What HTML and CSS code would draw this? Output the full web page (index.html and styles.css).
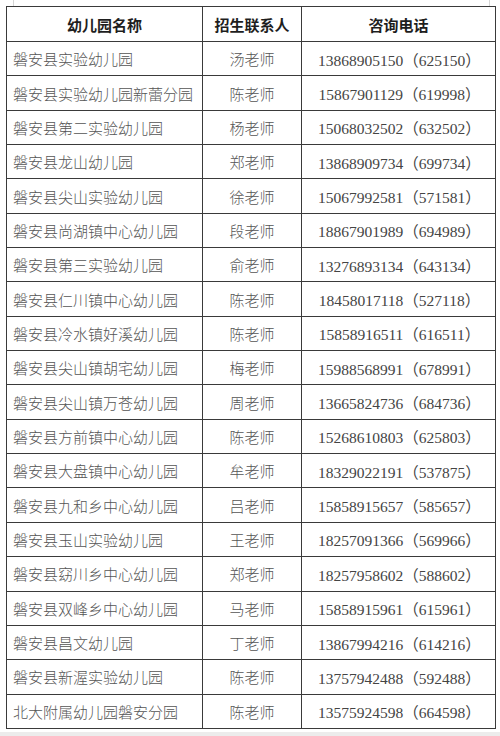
FILE: index.html
```html
<!DOCTYPE html>
<html lang="zh-CN">
<head>
<meta charset="utf-8">
<title>幼儿园招生联系表</title>
<link rel="stylesheet" href="styles.css">
</head>
<body>
<div class="page">
  <div class="marks"></div>
  <div class="table">
    <div class="cell head">幼儿园名称</div>
    <div class="cell head">招生联系人</div>
    <div class="cell head">咨询电话</div>

    <div class="cell name">磐安县实验幼儿园</div><div class="cell who">汤老师</div><div class="cell tel">13868905150（625150）</div>
    <div class="cell name">磐安县实验幼儿园新蕾分园</div><div class="cell who">陈老师</div><div class="cell tel">15867901129（619998）</div>
    <div class="cell name">磐安县第二实验幼儿园</div><div class="cell who">杨老师</div><div class="cell tel">15068032502（632502）</div>
    <div class="cell name">磐安县龙山幼儿园</div><div class="cell who">郑老师</div><div class="cell tel">13868909734（699734）</div>
    <div class="cell name">磐安县尖山实验幼儿园</div><div class="cell who">徐老师</div><div class="cell tel">15067992581（571581）</div>
    <div class="cell name">磐安县尚湖镇中心幼儿园</div><div class="cell who">段老师</div><div class="cell tel">18867901989（694989）</div>
    <div class="cell name">磐安县第三实验幼儿园</div><div class="cell who">俞老师</div><div class="cell tel">13276893134（643134）</div>
    <div class="cell name">磐安县仁川镇中心幼儿园</div><div class="cell who">陈老师</div><div class="cell tel">18458017118（527118）</div>
    <div class="cell name">磐安县冷水镇好溪幼儿园</div><div class="cell who">陈老师</div><div class="cell tel">15858916511（616511）</div>
    <div class="cell name">磐安县尖山镇胡宅幼儿园</div><div class="cell who">梅老师</div><div class="cell tel">15988568991（678991）</div>
    <div class="cell name">磐安县尖山镇万苍幼儿园</div><div class="cell who">周老师</div><div class="cell tel">13665824736（684736）</div>
    <div class="cell name">磐安县方前镇中心幼儿园</div><div class="cell who">陈老师</div><div class="cell tel">15268610803（625803）</div>
    <div class="cell name">磐安县大盘镇中心幼儿园</div><div class="cell who">牟老师</div><div class="cell tel">18329022191（537875）</div>
    <div class="cell name">磐安县九和乡中心幼儿园</div><div class="cell who">吕老师</div><div class="cell tel">15858915657（585657）</div>
    <div class="cell name">磐安县玉山实验幼儿园</div><div class="cell who">王老师</div><div class="cell tel">18257091366（569966）</div>
    <div class="cell name">磐安县窈川乡中心幼儿园</div><div class="cell who">郑老师</div><div class="cell tel">18257958602（588602）</div>
    <div class="cell name">磐安县双峰乡中心幼儿园</div><div class="cell who">马老师</div><div class="cell tel">15858915961（615961）</div>
    <div class="cell name">磐安县昌文幼儿园</div><div class="cell who">丁老师</div><div class="cell tel">13867994216（614216）</div>
    <div class="cell name">磐安县新渥实验幼儿园</div><div class="cell who">陈老师</div><div class="cell tel">13757942488（592488）</div>
    <div class="cell name">北大附属幼儿园磐安分园</div><div class="cell who">陈老师</div><div class="cell tel">13575924598（664598）</div>
  </div>
  <div class="bottom-band"></div>
</div>
</body>
</html>
```

FILE: styles.css
```css
html, body {
  margin: 0;
  padding: 0;
  background: #ffffff;
}

.page {
  width: 500px;
  height: 736px;
  overflow: hidden;
  display: flex;
  flex-direction: column;
}

.marks {
  height: 6px;
  width: 477px;
  margin-left: 13px;
  border-left: 1px solid #d6d6d6;
  border-right: 1px solid #d6d6d6;
  box-sizing: border-box;
  flex: none;
}

.table {
  margin-left: 6px;
  width: 490px;
  box-sizing: border-box;
  display: grid;
  grid-template-columns: 195px 98px 193px;
  grid-template-rows: 34px repeat(20, 33.35px);
  gap: 1px;
  background: #3a3a3a;
  border: 1px solid #3a3a3a;
  flex: none;
}

.cell {
  background: #ffffff;
  display: flex;
  align-items: center;
  font-family: "Noto Sans CJK SC", sans-serif;
  font-size: 15px;
  color: #555555;
  white-space: nowrap;
}

.head {
  justify-content: center;
  font-weight: 700;
  color: #1e1e1e;
}

.name {
  padding-left: 6px;
  font-weight: 300;
}

.who {
  justify-content: center;
  font-weight: 300;
}

.tel {
  justify-content: center;
  padding-left: 2px;
  font-family: "Liberation Serif", "Noto Sans CJK SC", serif;
  font-size: 15.5px;
  color: #444444;
}

.bottom-band {
  margin-top: 3px;
  height: 5px;
  background: #ececec;
  flex: none;
}
```
